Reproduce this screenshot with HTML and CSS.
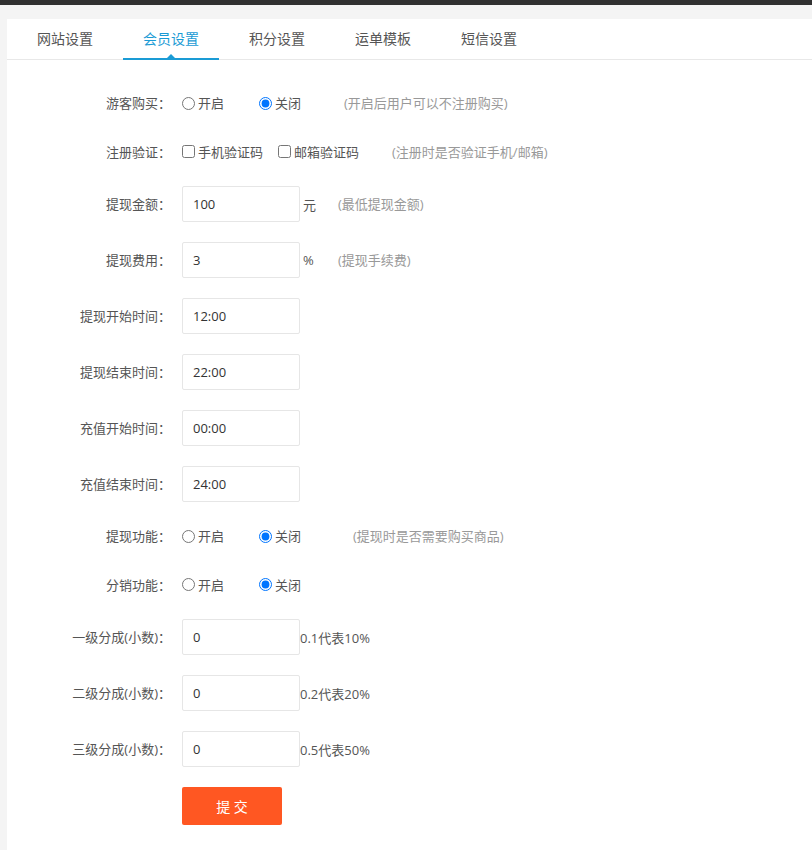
FILE: index.html
```html
<!DOCTYPE html>
<html lang="zh-CN">
<head>
<meta charset="utf-8">
<title>会员设置</title>
<link rel="stylesheet" href="styles.css">
</head>
<body>
<div class="topbar"></div>
<div class="page">
  <div class="card">
    <ul class="tabs">
      <li>网站设置</li>
      <li class="active">会员设置</li>
      <li>积分设置</li>
      <li>运单模板</li>
      <li>短信设置</li>
    </ul>
    <form class="form">
      <div class="row row-sm">
        <label class="lbl">游客购买：</label>
        <div class="ctl">
          <label class="opt"><input type="radio" name="guest">开启</label>
          <label class="opt"><input type="radio" name="guest" checked>关闭</label>
          <span class="hint">(开启后用户可以不注册购买)</span>
        </div>
      </div>
      <div class="row row-sm">
        <label class="lbl">注册验证：</label>
        <div class="ctl">
          <label class="chk"><input type="checkbox">手机验证码</label>
          <label class="chk"><input type="checkbox">邮箱验证码</label>
          <span class="hint hint-chk">(注册时是否验证手机/邮箱)</span>
        </div>
      </div>
      <div class="row">
        <label class="lbl">提现金额：</label>
        <div class="ctl">
          <input class="txt" type="text" value="100">
          <span class="unit">元</span>
          <span class="hint hint-unit">(最低提现金额)</span>
        </div>
      </div>
      <div class="row">
        <label class="lbl">提现费用：</label>
        <div class="ctl">
          <input class="txt" type="text" value="3">
          <span class="unit">%</span>
          <span class="hint hint-unit">(提现手续费)</span>
        </div>
      </div>
      <div class="row">
        <label class="lbl">提现开始时间：</label>
        <div class="ctl"><input class="txt" type="text" value="12:00"></div>
      </div>
      <div class="row">
        <label class="lbl">提现结束时间：</label>
        <div class="ctl"><input class="txt" type="text" value="22:00"></div>
      </div>
      <div class="row">
        <label class="lbl">充值开始时间：</label>
        <div class="ctl"><input class="txt" type="text" value="00:00"></div>
      </div>
      <div class="row">
        <label class="lbl">充值结束时间：</label>
        <div class="ctl"><input class="txt" type="text" value="24:00"></div>
      </div>
      <div class="row row-sm">
        <label class="lbl">提现功能：</label>
        <div class="ctl">
          <label class="opt"><input type="radio" name="withdraw">开启</label>
          <label class="opt"><input type="radio" name="withdraw" checked>关闭</label>
          <span class="hint hint-wide">(提现时是否需要购买商品)</span>
        </div>
      </div>
      <div class="row row-sm">
        <label class="lbl">分销功能：</label>
        <div class="ctl">
          <label class="opt"><input type="radio" name="dist">开启</label>
          <label class="opt"><input type="radio" name="dist" checked>关闭</label>
        </div>
      </div>
      <div class="row">
        <label class="lbl">一级分成(小数)：</label>
        <div class="ctl">
          <input class="txt" type="text" value="0">
          <span class="note">0.1代表10%</span>
        </div>
      </div>
      <div class="row">
        <label class="lbl">二级分成(小数)：</label>
        <div class="ctl">
          <input class="txt" type="text" value="0">
          <span class="note">0.2代表20%</span>
        </div>
      </div>
      <div class="row">
        <label class="lbl">三级分成(小数)：</label>
        <div class="ctl">
          <input class="txt" type="text" value="0">
          <span class="note">0.5代表50%</span>
        </div>
      </div>
      <div class="row row-btn">
        <span class="lbl"></span>
        <div class="ctl"><button type="button" class="btn">提 交</button></div>
      </div>
    </form>
  </div>
</div>
</body>
</html>
```

FILE: styles.css
```css
html, body {
  margin: 0;
  padding: 0;
  height: 100%;
  overflow: hidden;
}
body {
  background: #f4f4f4;
  font-family: "Open Sans", "Noto Sans CJK SC", sans-serif;
  font-size: 13px;
  color: #555;
}
.topbar {
  height: 5px;
  background: #303030;
}
.page {
  padding: 14px 0 0 7px;
}
.card {
  background: #fff;
  height: calc(100vh - 19px);
  overflow: hidden;
}
.tabs {
  list-style: none;
  margin: 0;
  padding: 0 0 0 10px;
  display: flex;
  height: 40px;
  border-bottom: 1px solid #e8e8e8;
}
.tabs li {
  position: relative;
  padding: 0 20px;
  margin-right: 10px;
  line-height: 40px;
  font-size: 14px;
  color: #555;
  white-space: nowrap;
}
.tabs li.active {
  color: #1a9bd5;
}
.tabs li.active::after {
  content: "";
  position: absolute;
  left: 0;
  right: 0;
  bottom: -1px;
  height: 2px;
  background: #1a9bd5;
}
.tabs li.active::before {
  content: "";
  position: absolute;
  left: 50%;
  margin-left: -4px;
  bottom: 1px;
  border-left: 4px solid transparent;
  border-right: 4px solid transparent;
  border-bottom: 4px solid #1a9bd5;
}
.form {
  padding-top: 29px;
}
.row {
  display: flex;
  align-items: center;
  height: 36px;
  margin-bottom: 20px;
}
.row-sm {
  height: 28.5px;
}
.row-btn {
  height: 38px;
}
.lbl {
  width: 164px;
  flex: none;
  text-align: right;
  color: #555;
  line-height: 20px;
  white-space: nowrap;
}
.ctl {
  margin-left: 11px;
  display: flex;
  align-items: center;
  white-space: nowrap;
}
.opt, .chk {
  display: flex;
  align-items: center;
  color: #555;
  line-height: 20px;
}
.opt {
  margin-right: 35px;
}
.chk {
  margin-right: 15px;
}
.opt input, .chk input {
  width: 13px;
  height: 13px;
  margin: 0 3px 0 0;
}
.hint {
  color: #999;
  margin-left: 8px;
  line-height: 20px;
}
.hint-chk {
  margin-left: 18px;
}
.hint-wide {
  margin-left: 17px;
}
.hint-unit {
  margin-left: 0;
}
.txt {
  box-sizing: border-box;
  width: 118px;
  height: 36px;
  border: 1px solid #e6e6e6;
  border-radius: 2px;
  padding: 0 10px;
  font-family: "Open Sans", "Noto Sans CJK SC", sans-serif;
  font-size: 13px;
  color: #333;
  outline: none;
}
.unit {
  width: 35px;
  margin-left: 3px;
  color: #555;
}
.note {
  color: #555;
}
.btn {
  width: 100px;
  height: 38px;
  border: none;
  border-radius: 2px;
  background: #ff5722;
  color: #fff;
  font-family: "Open Sans", "Noto Sans CJK SC", sans-serif;
  font-size: 14px;
  padding: 0;
  cursor: pointer;
}
```
